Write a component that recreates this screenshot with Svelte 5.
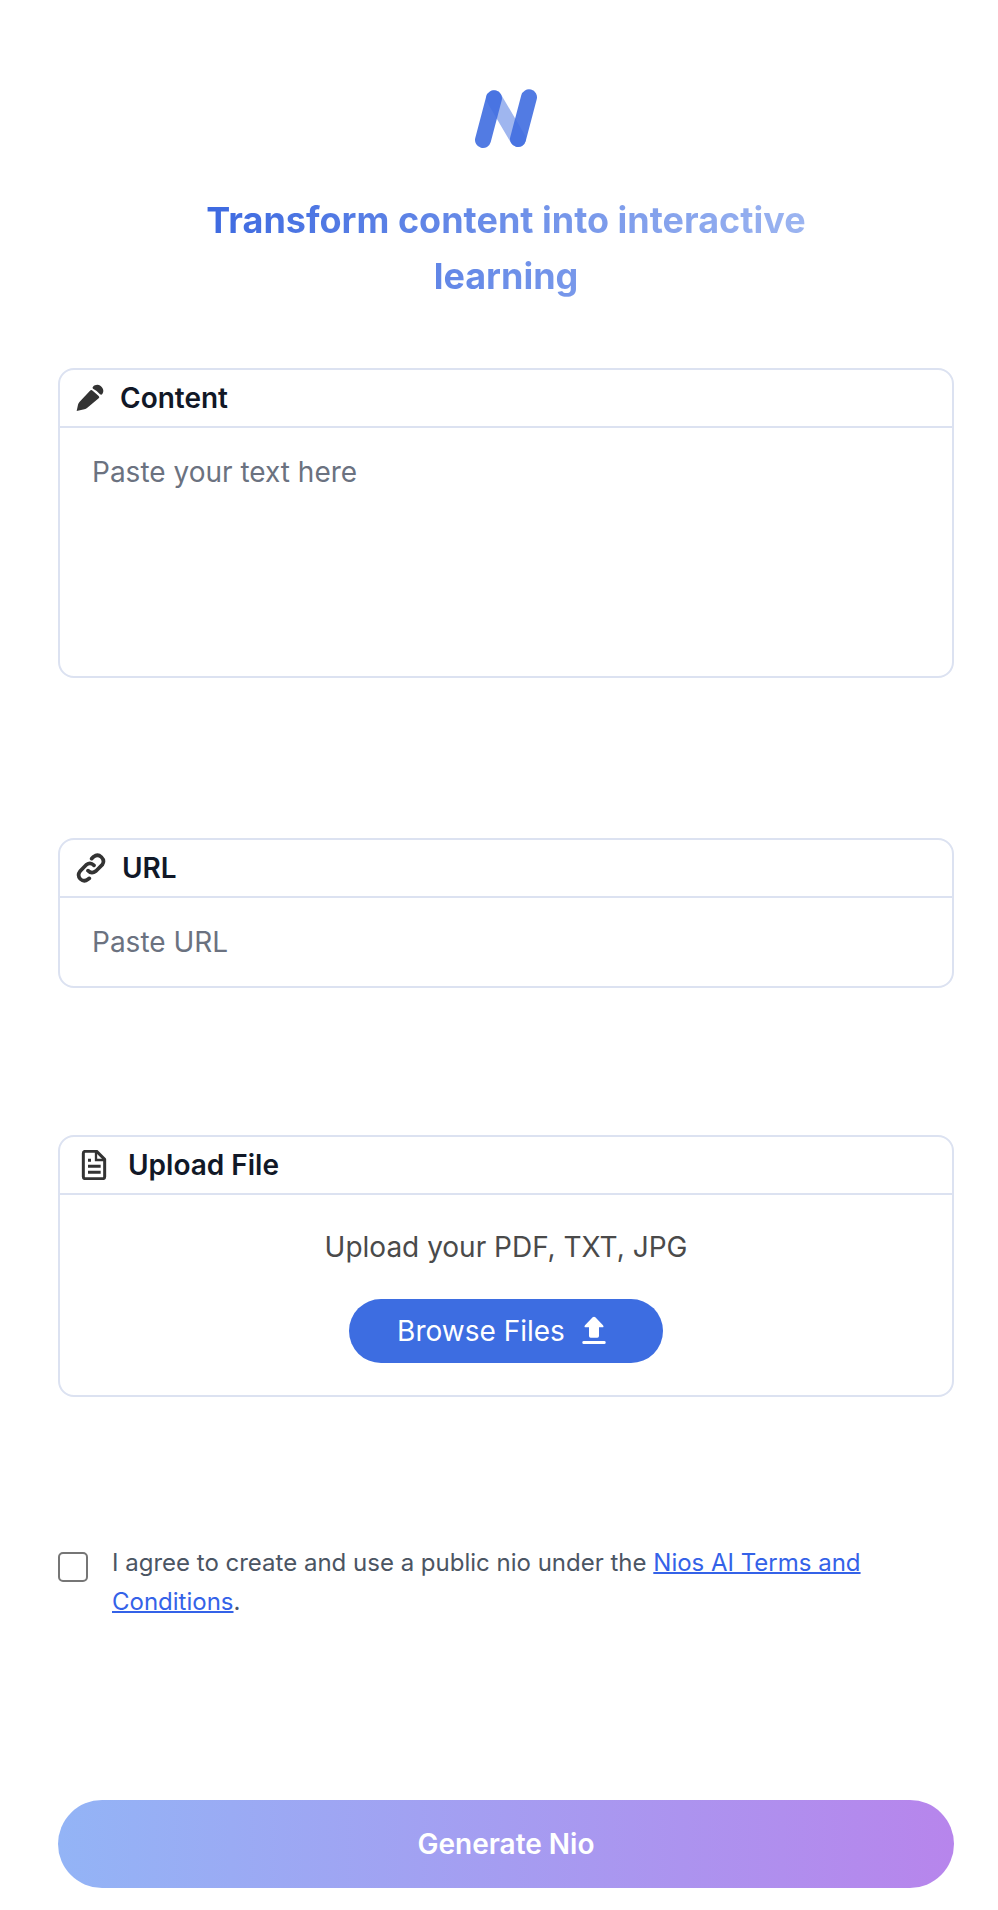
<script>
  let content = $state('');
  let url = $state('');
  let agreed = $state(false);
  let picker;
</script>

<main class="page">
  <header class="intro">
    <svg class="logo" viewBox="0 0 64 60" role="img" aria-label="Nio">
      <g fill="none" stroke="#3f6de0" stroke-width="16" stroke-linecap="round">
        <path d="M20 9.3 44 50" opacity="0.5" />
        <path d="M20 9.3 9 51" opacity="0.9" />
        <path d="M55 8.3 44 50" opacity="0.9" />
      </g>
    </svg>
    <h1>Transform content into interactive learning</h1>
  </header>

  <form onsubmit={(event) => event.preventDefault()}>
    <section class="card content">
      <label class="title" for="content">
        <svg class="icon" width="28" height="28" viewBox="0 0 84 84" fill="#333">
          <path d="M2 81 6 62Q7 57 11 53L42 20Q46 16 50 20L68 36Q72 40 68 43L34 71Q30 75 25 76Z" />
          <path d="M51 14Q48 11 51 8C57 1 67 0 74 6C83 13 84 23 79 30Q76 34 72 31Q64 20 51 14Z" />
        </svg>
        Content
      </label>
      <textarea id="content" placeholder="Paste your text here" bind:value={content}></textarea>
    </section>

    <section class="card url">
      <label class="title" for="url">
        <svg class="icon" width="30" height="30" viewBox="0 0 90 90" fill="none" stroke="#333" stroke-width="11" stroke-linecap="round" stroke-linejoin="round">
          <path d="M47 17 53 11Q65 2 76 12Q87 23 79 35L60 54Q47 64 36 53" />
          <path d="M54 37Q43 26 31 35L12 55Q3 67 13 78Q24 88 36 79L40 76" />
        </svg>
        URL
      </label>
      <input class="field" id="url" type="text" placeholder="Paste URL" bind:value={url} />
    </section>

    <section class="card upload">
      <h2 class="title">
        <svg class="icon" width="36" height="30" viewBox="0 0 108 90" fill="none" stroke="#333" stroke-width="9">
          <path d="M28 4H62L86 28V80Q86 86 80 86H28Q22 86 22 80V10Q22 4 28 4Z" stroke-linejoin="round" />
          <path d="M60 6V30H85" stroke-width="7" />
          <path d="M36 31H45M36 49H74M36 67H74" />
        </svg>
        Upload File
      </h2>
      <div class="drop">
        <p>Upload your PDF, TXT, JPG</p>
        <button class="browse" type="button" onclick={() => picker.click()}>
          Browse Files
          <svg width="30" height="30" viewBox="0 0 90 90" fill="#fff">
            <path d="M35 4Q39 0 43 4L66 28Q70 34 64 34H54V60Q54 65 49 65H29Q24 65 24 60V34H14Q8 34 12 28Z" />
            <rect x="4" y="75" width="70" height="9" rx="4" />
          </svg>
        </button>
        <input type="file" accept=".pdf,.txt,.jpg" aria-label="Upload file" hidden bind:this={picker} />
      </div>
    </section>

    <div class="terms">
      <input id="agree" type="checkbox" bind:checked={agreed} />
      <label for="agree">I agree to create and use a public nio under the <a href="#terms">Nios AI Terms and Conditions</a>.</label>
    </div>

    <button class="generate" type="submit">Generate Nio</button>
  </form>
</main>

<style>
  :global(body) {
    background: #fff;
  }
  .page,
  .page * {
    box-sizing: border-box;
  }
  .page {
    padding: 89px 44px 22px 58px;
    font: 400 28px/40px Inter, sans-serif;
    color: #111827;
  }
  .intro {
    display: flex;
    flex-direction: column;
    align-items: center;
    gap: 43px;
    margin-bottom: 64px;
  }
  .logo {
    width: 64px;
    height: 60px;
  }
  h1 {
    max-width: 640px;
    margin: 0;
    font-size: 36px;
    line-height: 56px;
    font-weight: 700;
    text-align: center;
    background: linear-gradient(90deg, #3a67e0, #9fb7f1);
    background-clip: text;
    -webkit-background-clip: text;
    color: transparent;
  }
  form {
    display: flex;
    flex-direction: column;
  }
  .card {
    display: flex;
    flex-direction: column;
    border: 2px solid #dce2f1;
    border-radius: 16px;
    overflow: hidden;
  }
  .content {
    margin-bottom: 160px;
  }
  .url {
    margin-bottom: 147px;
  }
  .upload {
    margin-bottom: 146px;
  }
  .title {
    display: flex;
    align-items: center;
    gap: 16px;
    height: 58px;
    margin: 0;
    padding: 0 16px;
    border-bottom: 2px solid #dce2f1;
    font-size: 28px;
    font-weight: 600;
  }
  .icon {
    flex: none;
  }
  textarea,
  .field {
    display: block;
    width: 100%;
    margin: 0;
    padding: 24px 32px;
    border: 0;
    outline: 0;
    background: transparent;
    font: inherit;
    color: inherit;
    resize: none;
  }
  textarea {
    height: 248px;
  }
  .field {
    height: 88px;
  }
  textarea::placeholder,
  .field::placeholder {
    color: #6b7280;
    opacity: 1;
  }
  .drop {
    display: flex;
    flex-direction: column;
    align-items: center;
    gap: 32px;
    padding: 32px;
  }
  .drop p {
    margin: 0;
    color: #4a4a4a;
  }
  .browse {
    display: flex;
    align-items: center;
    gap: 16px;
    height: 64px;
    padding: 0 52px 0 48px;
    border: 0;
    border-radius: 32px;
    background: #3d6de1;
    color: #fff;
    font: inherit;
    cursor: pointer;
  }
  .terms {
    display: flex;
    align-items: flex-start;
    gap: 24px;
    margin-bottom: 179px;
    font-size: 24px;
    line-height: 39px;
    color: #4b5563;
  }
  .terms input {
    flex: none;
    appearance: none;
    width: 30px;
    height: 30px;
    margin: 9px 0 0;
    border: 2px solid #767676;
    border-radius: 5px;
    background: #fff;
  }
  .terms input:checked {
    border-color: #3d6de1;
    background: #3d6de1;
  }
  .terms a {
    color: #3462e8;
    text-decoration: underline 2px;
  }
  .generate {
    height: 88px;
    border: 0;
    border-radius: 44px;
    background: linear-gradient(90deg, #93b4f6, #b785ec);
    color: #fff;
    font: 600 28px/40px Inter, sans-serif;
    cursor: pointer;
  }
</style>
